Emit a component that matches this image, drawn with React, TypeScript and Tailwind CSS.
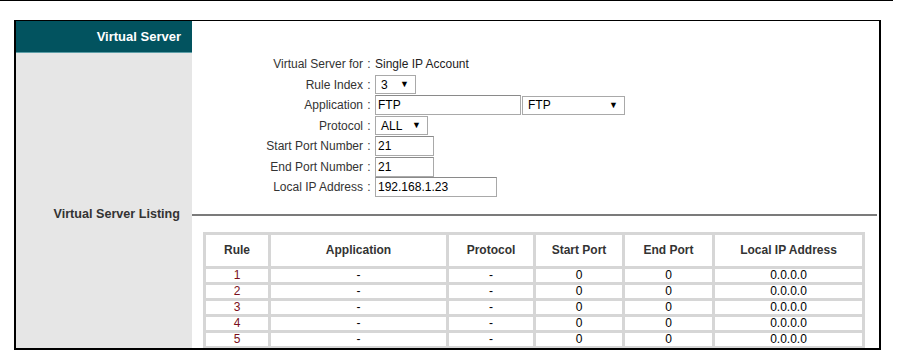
import React from 'react';

const font = { fontFamily: '"Liberation Sans", Arial, sans-serif' };

function Select({ value, width }: { value: string; width: string }) {
  return (
    <div className={`${width} h-[19px] border border-[#a9a9a9] bg-white flex items-center justify-between pl-[5px] pr-[6px] text-[12px] text-black`}>
      <span>{value}</span>
      <span className="text-[9px] leading-none">▼</span>
    </div>
  );
}

function Input({ value, width }: { value: string; width: string }) {
  return (
    <div className={`${width} h-[20px] border border-[#a9a9a9] border-t-[#8a8a8a] bg-white flex items-center pl-[2px] text-[12px] text-black`}>
      {value}
    </div>
  );
}

const rows = [1, 2, 3, 4, 5];

export default function App() {
  const fields: { label: string; control: React.ReactNode }[] = [
    { label: 'Virtual Server for', control: <span className="text-[12px] text-[#222]">Single IP Account</span> },
    { label: 'Rule Index', control: <Select value="3" width="w-[41px]" /> },
    {
      label: 'Application',
      control: (
        <div className="flex items-center gap-[1px]">
          <Input value="FTP" width="w-[146px]" />
          <Select value="FTP" width="w-[103px]" />
        </div>
      ),
    },
    { label: 'Protocol', control: <Select value="ALL" width="w-[53px]" /> },
    { label: 'Start Port Number', control: <Input value="21" width="w-[59px]" /> },
    { label: 'End Port Number', control: <Input value="21" width="w-[59px]" /> },
    { label: 'Local IP Address', control: <Input value="192.168.1.23" width="w-[122px]" /> },
  ];

  return (
    <div className="w-[903px] h-[350px] bg-white overflow-hidden" style={font}>
      <div className="w-[893px] h-px bg-black" />
      <div className="ml-[14px] mt-[19px] w-[867px] h-[330px] overflow-hidden border border-black border-x-2 border-b-2 grid grid-cols-[176px_1fr] grid-rows-[32px_144.5px_34px_1fr]">
        {/* header */}
        <div className="bg-[#02535f] border-b border-[#5d9ea7] flex items-center justify-end pr-[11px] text-white font-bold text-[13px]">
          Virtual Server
        </div>
        <div className="bg-white" />

        {/* form */}
        <div className="bg-[#e6e6e6]" />
        <div className="flex flex-col pt-[1px]">
          {fields.map((f) => (
            <div key={f.label} className="h-[20.5px] flex items-center">
              <div className="w-[171px] text-right text-[12px] text-[#333]">{f.label}</div>
              <div className="w-[12px] text-center text-[12px] text-[#333]">:</div>
              {f.control}
            </div>
          ))}
        </div>

        {/* listing title */}
        <div className="bg-[#e6e6e6] flex items-center justify-end pr-[12px] font-bold text-[12.6px] text-[#333]">
          Virtual Server Listing
        </div>
        <div className="flex items-center pr-[2px]">
          <div className="w-full h-[2px] bg-[#7b7b7b]" />
        </div>

        {/* table */}
        <div className="bg-[#e6e6e6]" />
        <div className="pl-[11px]">
          <table className="w-[662px] border-collapse text-[12px] text-center">
            <thead>
              <tr className="h-[34px]">
                <th className="w-[65px] border-[3px] border-[#d6d6d6] text-[#333]">Rule</th>
                <th className="w-[178px] border-[3px] border-[#d6d6d6] text-[#333]">Application</th>
                <th className="w-[87px] border-[3px] border-[#d6d6d6] text-[#333]">Protocol</th>
                <th className="w-[89px] border-[3px] border-[#d6d6d6] text-[#333]">Start Port</th>
                <th className="w-[90px] border-[3px] border-[#d6d6d6] text-[#333]">End Port</th>
                <th className="border-[3px] border-[#d6d6d6] text-[#333]">Local IP Address</th>
              </tr>
            </thead>
            <tbody>
              {rows.map((r) => (
                <tr key={r} className="h-[16px] leading-[13px]">
                  <td className="border-[3px] border-[#d6d6d6] text-[#7a0f1b]">{r}</td>
                  <td className="border-[3px] border-[#d6d6d6] text-black">-</td>
                  <td className="border-[3px] border-[#d6d6d6] text-black">-</td>
                  <td className="border-[3px] border-[#d6d6d6] text-black">0</td>
                  <td className="border-[3px] border-[#d6d6d6] text-black">0</td>
                  <td className="border-[3px] border-[#d6d6d6] text-black">0.0.0.0</td>
                </tr>
              ))}
            </tbody>
          </table>
        </div>
      </div>
    </div>
  );
}
